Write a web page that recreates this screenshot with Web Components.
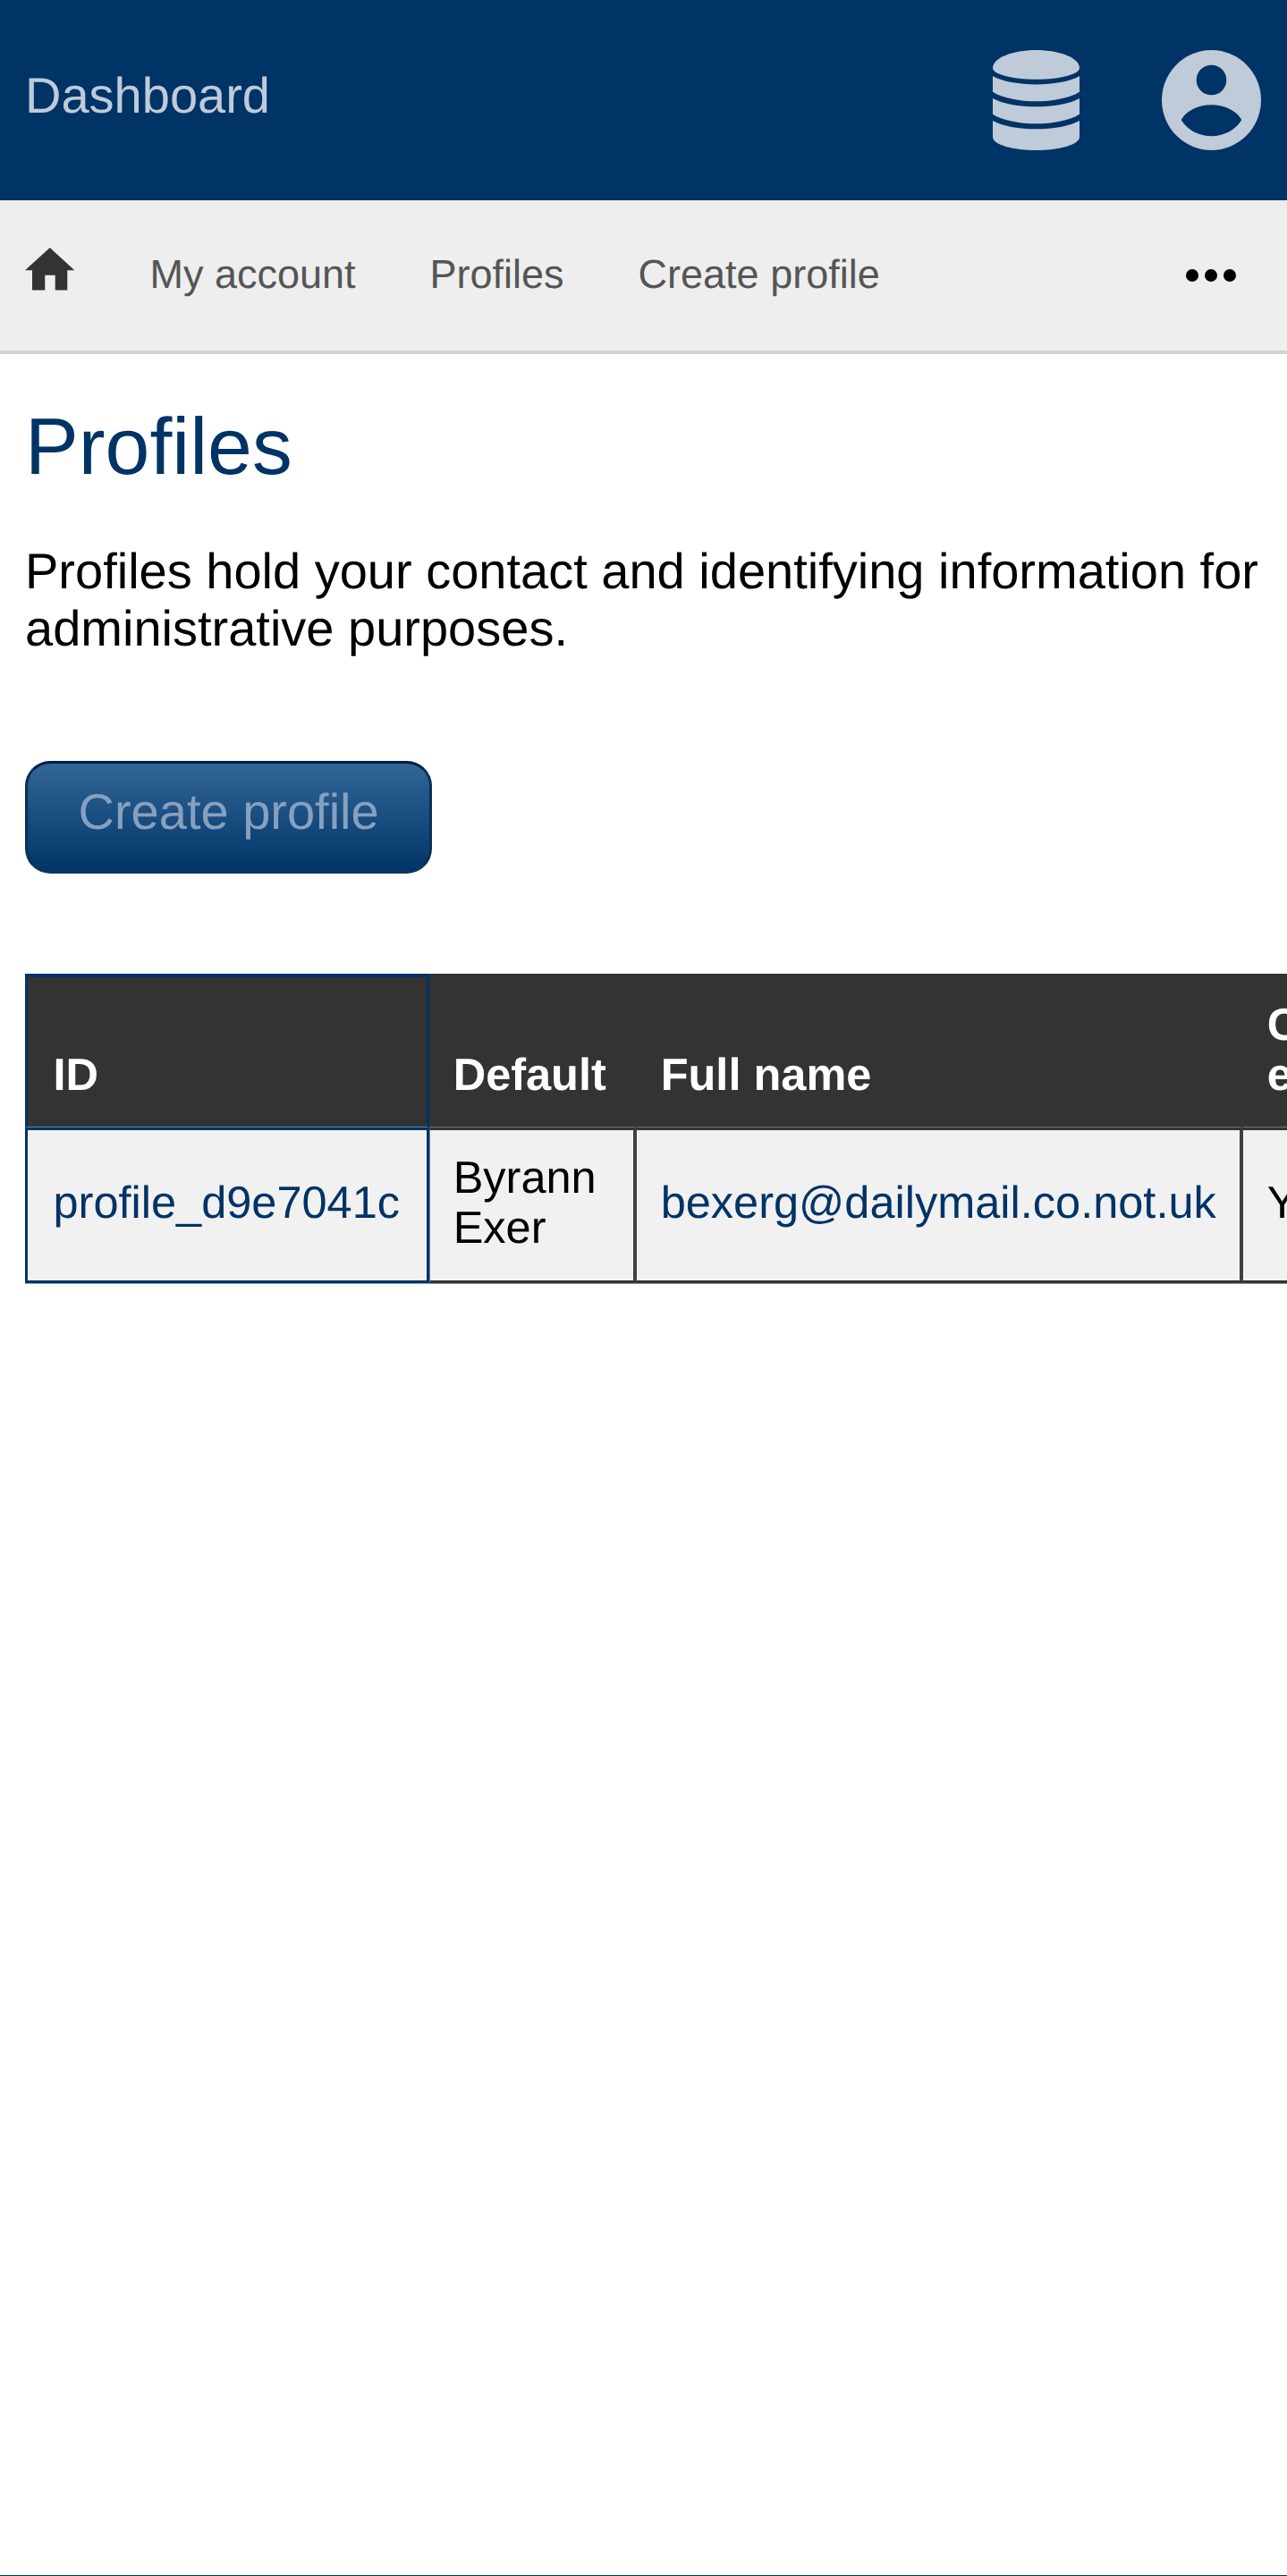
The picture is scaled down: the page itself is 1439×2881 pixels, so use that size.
<!DOCTYPE html>
<html lang="en">
<head>
<meta charset="utf-8">
<title>Profiles</title>
<style>
  html, body { margin: 0; padding: 0; background: #fff; }
  body { font-family: "Liberation Sans", Arial, sans-serif; text-rendering: geometricPrecision; }
</style>
</head>
<body>
<app-page>
  <site-header slot="header" title-text="Dashboard"></site-header>
  <site-nav slot="nav">
    <nav-link>My account</nav-link>
    <nav-link>Profiles</nav-link>
    <nav-link>Create profile</nav-link>
  </site-nav>
  <page-title>Profiles</page-title>
  <intro-text>Profiles hold your contact and identifying information for administrative purposes.</intro-text>
  <action-button>Create profile</action-button>
  <profile-table></profile-table>
</app-page>

<template id="t-page">
  <style>
    :host { display: flex; flex-direction: column; min-height: 100vh; box-sizing: border-box; }
    main { flex: 1; display: flex; flex-direction: column; align-items: stretch; padding-left: 28px; }
    footer { height: 0; border-top: 1px solid #003366; }
  </style>
  <slot name="header"></slot>
  <slot name="nav"></slot>
  <main><slot></slot></main>
  <footer></footer>
</template>

<template id="t-header">
  <style>
    :host { display: flex; align-items: center; justify-content: space-between; height: 224px; background: #003366; color: #bfcbd9; padding: 0 29px 0 28px; box-sizing: border-box; }
    .title { font-size: 56px; line-height: 64px; padding-bottom: 10px; }
    .icons { display: flex; align-items: center; gap: 92px; }
    svg { display: block; fill: #bfcbd9; }
  </style>
  <div class="title" id="title"></div>
  <div class="icons">
    <svg width="97" height="112" viewBox="0 0 97 112" aria-label="Database">
      <path d="M0 20C0 9 21.7 0 48.5 0S97 9 97 20C97 27 76 32.7 48.5 32.7S0 27 0 20Z"/>
      <path d="M0 29C10 35 30 38.5 48.5 38.5S87 35 97 29V46.7C87 53.5 67 57.3 48.5 57.3S10 53.5 0 46.7Z"/>
      <path d="M0 54C10 60 30 63.3 48.5 63.3S87 60 97 54V71.7C87 78.5 67 82.3 48.5 82.3S10 78.5 0 71.7Z"/>
      <path d="M0 79C10 85 30 88.3 48.5 88.3S87 85 97 79V97C97 106 74 112 48.5 112S0 106 0 97Z"/>
    </svg>
    <svg width="111" height="112" viewBox="0 0 111 112" aria-label="Account">
      <path fill-rule="evenodd" d="M55.5 0A55.5 56 0 1 1 55.5 112A55.5 56 0 1 1 55.5 0ZM55.5 16.7A16.8 16.8 0 1 0 55.5 50.3A16.8 16.8 0 1 0 55.5 16.7ZM22.6 76.5C21.8 77.5 21.8 78.5 22.6 79.5C29 89.5 42 96.3 55.5 96.3S82 89.5 88.4 79.5C89.2 78.5 89.2 77.5 88.4 76.5C82 67 69 61.3 55.5 61.3S29 67 22.6 76.5Z"/>
    </svg>
  </div>
</template>

<template id="t-nav">
  <style>
    :host { display: flex; align-items: center; height: 172px; box-sizing: border-box; background: #eeeeee; border-bottom: 4px solid #d3d3d3; padding: 0 57px 0 28px; }
    .home { display: block; width: 55px; height: 48px; fill: #333; margin-bottom: 14px; flex: none; }
    .links { display: flex; align-items: center; gap: 83px; margin-left: 84.4px; flex: 1; }
    .more { display: flex; gap: 7px; flex: none; }
    .more i { display: block; width: 14px; height: 14px; border-radius: 50%; background: #000; }
  </style>
  <svg class="home" viewBox="0 0 55 48" aria-label="Home"><path d="M27.8 0L55.3 25.3H47.3V47.5H33.7V30.7H22.3V47.5H8V25.3H0Z"/></svg>
  <div class="links"><slot></slot></div>
  <div class="more" aria-label="More"><i></i><i></i><i></i></div>
</template>

<template id="t-navlink">
  <style>
    :host { display: block; font-size: 45px; line-height: 52px; color: #555; padding-bottom: 2px; white-space: nowrap; }
  </style>
  <slot></slot>
</template>

<template id="t-title">
  <style>
    :host { display: block; font-size: 89.6px; line-height: 101px; color: #003366; margin-top: 53px; }
  </style>
  <slot></slot>
</template>

<template id="t-intro">
  <style>
    :host { display: block; font-size: 56px; line-height: 63.5px; color: #000; margin-top: 57px; padding-right: 28px; }
  </style>
  <slot></slot>
</template>

<template id="t-button">
  <style>
    :host { display: block; margin-top: 117px; }
    .btn {
      display: inline-block; box-sizing: border-box; height: 126px;
      padding: 0 56.5px 12px; line-height: 108px; font-size: 56px; color: #86a0bf;
      border: 3px solid #0c2f55; border-top-color: #001f44; border-bottom-color: #10365f; border-radius: 28px;
      background: linear-gradient(to bottom, #336699, #003366);
      background-origin: border-box;
      white-space: nowrap;
    }
  </style>
  <div class="btn" role="button"><slot></slot></div>
</template>

<template id="t-table">
  <style>
    :host { display: block; margin-top: 112px; overflow: hidden; padding-bottom: 2px; font-size: 50.5px; line-height: 56px; }
    table { border-collapse: separate; border-spacing: 0; table-layout: fixed; width: 1662px; }
    th, td { box-sizing: border-box; padding: 25px 26.67px 31px; text-align: left; }
    th { background: #333; color: #fff; font-weight: bold; vertical-align: bottom; border-top: 4px solid #333; border-right: 4px solid #333; border-bottom: 1px solid #777; padding-top: 25px; padding-bottom: 30px; }
    td { background: #f1f1f1; color: #000; vertical-align: middle; border-top: 3px solid #333; border-right: 4px solid #404040; border-bottom: 3px solid #333; box-shadow: 0 1px 0 #8a8a8a; }
    .first { border-left: 3px solid #003366; border-right: 3px solid #003366; border-top-color: #003366; padding-left: 28.5px; }
    th.first { border-bottom: 1px solid #5f83a8; }
    td.first { border-bottom-color: #003366; box-shadow: 0 1px 0 #7f9cba; }
    td.second { border-left: 1px solid #5f83a8; padding-left: 25.67px; }
    th.second { border-left: 1px solid #333; padding-left: 25.67px; }
    a { color: #003366; text-decoration: none; }
  </style>
  <table>
    <colgroup><col style="width:452px"><col style="width:232px"><col style="width:678px"><col style="width:300px"></colgroup>
    <thead>
      <tr><th class="first">ID</th><th class="second">Default</th><th>Full name</th><th>Contact email</th></tr>
    </thead>
    <tbody>
      <tr>
        <td class="first"><a href="#">profile_d9e7041c</a></td>
        <td class="second">Byrann Exer</td>
        <td><a href="#">bexerg@dailymail.co.not.uk</a></td>
        <td>Yes</td>
      </tr>
    </tbody>
  </table>
</template>

<script>
  function base(id) {
    return class extends HTMLElement {
      constructor() {
        super();
        this.attachShadow({ mode: 'open' }).appendChild(document.getElementById(id).content.cloneNode(true));
      }
    };
  }
  customElements.define('app-page', base('t-page'));
  customElements.define('site-header', class extends base('t-header') {
    connectedCallback() { this.shadowRoot.getElementById('title').textContent = this.getAttribute('title-text'); }
  });
  customElements.define('site-nav', base('t-nav'));
  customElements.define('nav-link', base('t-navlink'));
  customElements.define('page-title', base('t-title'));
  customElements.define('intro-text', base('t-intro'));
  customElements.define('action-button', base('t-button'));
  customElements.define('profile-table', base('t-table'));
</script>
</body>
</html>
